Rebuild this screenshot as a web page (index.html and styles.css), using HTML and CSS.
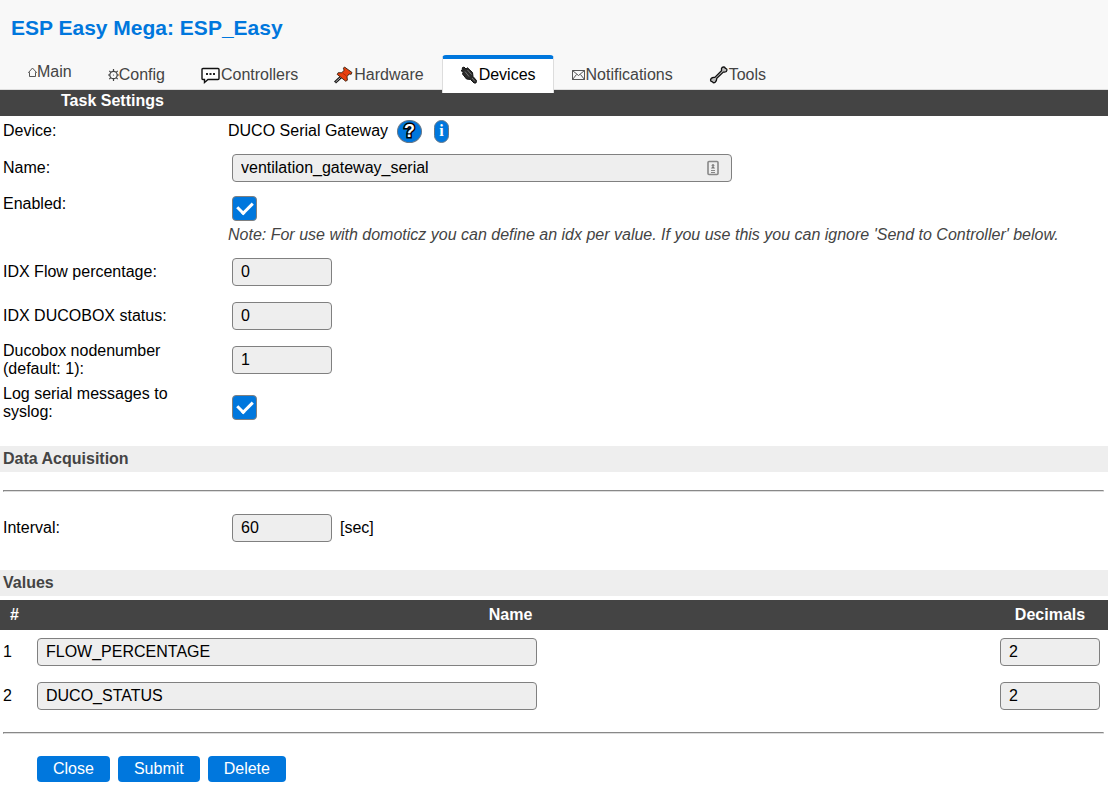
FILE: index.html
```html
<!DOCTYPE html>
<html lang="en">
<head>
<meta charset="utf-8">
<meta name="viewport" content="width=device-width, initial-scale=1">
<title>ESP_Easy</title>
<link rel="stylesheet" href="styles.css">
</head>
<body>
<header class="header">
  <h1 class="title">ESP Easy Mega: ESP_Easy</h1>
  <nav class="menu">
    <a class="tab tab-raised" href="#main"><svg width="9" height="12" viewBox="0 0 9 12" fill="none" stroke="#444"><path d="M.5 6.500 4.500 2l4 4.500h-1v4h-6v-4z" stroke-width=".9"/></svg>Main</a>
    <a class="tab" href="#config"><svg width="11" height="14" viewBox="0 0 11 14" fill="none" stroke="#444"><circle cx="5.500" cy="7" r="3.700" stroke-width="1.200"/><circle cx="5.500" cy="7" r=".6" fill="#444" stroke="none"/><path d="M5.500 1v2M5.500 11v2M0 7h2M9 7h2M1.300 2.800l1.500 1.500M8.200 9.700l1.500 1.500M9.700 2.800 8.200 4.300M2.800 9.700l-1.500 1.500" stroke-width="1.200"/></svg>Config</a>
    <a class="tab" href="#controllers"><svg width="20" height="18" viewBox="0 0 20 18"><path d="M2 2.500h15q1 0 1 1v9q0 1-1 1H7L3.500 16.500v-3H2q-1 0-1-1v-9q0-1 1-1z" fill="#fff" stroke="#111" stroke-width="1.400"/><path d="M5 7h2v2H5zM8.500 7h2v2h-2zM12 7h2v2h-2z" fill="#222"/></svg>Controllers</a>
    <a class="tab" href="#hardware"><svg width="20" height="18" viewBox="0 0 20 18"><path d="M1 16.500 7.500 10.500" stroke="#111" stroke-width="3"/><path d="M1.500 16 7 11" stroke="#bbb" stroke-width="1"/><path d="m10.500 1 7.500 5.500-.8 1.800-2.200-.3-2 2.700.4 3.500-1.700 1L3.200 8.400l1-1.700 3.600.1 2.300-2.600-.7-2z" fill="#e8400f" stroke="#321" stroke-width=".9"/><path d="m8.500 7 4 3" stroke="#b52a08"/></svg>Hardware</a>
    <a class="tab tab-active" href="#devices" aria-current="page"><svg width="19" height="18" viewBox="0 0 19 18"><path d="m1 4.500 2-1-1-1.500 2-1 2 2 1.500-1.200L12.500 6.500l.5 4 3.500 4-.5 2.500h-2l-3.500-3.500-4-.5-4-5 .7-1.500z" fill="#2a2a2a" stroke="#111"/><path d="m5 5.500 4 5M7.500 4l4 4.500M12 12l3 3.500" stroke="#888" stroke-width=".8"/></svg>Devices</a>
    <a class="tab" href="#notifications"><svg width="14" height="12" viewBox="0 0 14 12" fill="none" stroke="#444"><path d="M.5 1.500h12v9H.5zM.5 1.500l6 5 6-5M.5 10.500l4-5M12.500 10.500l-4-5" stroke-width=".9"/></svg>Notifications</a>
    <a class="tab" href="#tools"><svg width="20" height="18" viewBox="0 0 20 18"><path d="M12.500 2.500Q13 .8 15 1q1.300.2 1.300 1.300 1.700.2 1.700 1.700-.2 2-2.500 2.200l-1.200-.1-6.500 6.200q0 3-1.800 4.200-1.500.8-2.500-.6-2-.2-2-1.900.3-2.300 3.200-2.600h1.100l6.700-6.600z" fill="#bbb" stroke="#111" stroke-width="1.300"/></svg>Tools</a>
  </nav>
</header>

<main>
  <h2 class="bar">Task Settings</h2>
  <form class="form">
    <div class="row row-short">
      <span class="label">Device:</span>
      <span class="field">DUCO Serial Gateway
        <a class="badge badge-help" href="#help" aria-label="Help">?</a>
        <a class="badge badge-info" href="#info" aria-label="Info">i</a>
      </span>
    </div>
    <div class="row row-input">
      <label class="label" for="name">Name:</label>
      <span class="field field-name"><input class="input input-wide" id="name" type="text" value="ventilation_gateway_serial"><svg class="contact" width="12" height="16" viewBox="0 0 12 16" fill="none" stroke="#888"><rect x="1" y="1.500" width="10" height="13" rx="1" stroke-width="1.600"/><path d="M4 10.500h4M4 12.500h4"/><circle cx="6" cy="5.500" r="1" fill="#777"/><path d="M4 8.500h4L7 7H5z" fill="#777" stroke="none"/></svg></span>
    </div>
    <div class="row">
      <label class="label" for="enabled">Enabled:</label>
      <input class="check" id="enabled" type="checkbox" checked>
    </div>
    <p class="note">Note: For use with domoticz you can define an idx per value. If you use this you can ignore 'Send to Controller' below.</p>
    <div class="row row-input">
      <label class="label" for="idx1">IDX Flow percentage:</label>
      <input class="input input-num" id="idx1" type="text" value="0">
    </div>
    <div class="row row-input">
      <label class="label" for="idx2">IDX DUCOBOX status:</label>
      <input class="input input-num" id="idx2" type="text" value="0">
    </div>
    <div class="row row-input">
      <label class="label" for="node">Ducobox nodenumber (default: 1):</label>
      <input class="input input-num" id="node" type="text" value="1">
    </div>
    <div class="row row-tall">
      <label class="label" for="log">Log serial messages to syslog:</label>
      <input class="check" id="log" type="checkbox" checked>
    </div>

    <h3 class="section section-data">Data Acquisition</h3>
    <hr class="rule">
    <div class="row row-input row-interval">
      <label class="label" for="interval">Interval:</label>
      <input class="input input-num" id="interval" type="text" value="60">
      <span>[sec]</span>
    </div>

    <h3 class="section section-values">Values</h3>
    <table class="values">
      <thead>
        <tr><th class="col-num">#</th><th>Name</th><th class="col-dec">Decimals</th></tr>
      </thead>
      <tbody>
        <tr>
          <td class="num">1</td>
          <td><input class="input input-wide" type="text" value="FLOW_PERCENTAGE" aria-label="Name 1"></td>
          <td><input class="input input-num" type="text" value="2" aria-label="Decimals 1"></td>
        </tr>
        <tr>
          <td class="num">2</td>
          <td><input class="input input-wide" type="text" value="DUCO_STATUS" aria-label="Name 2"></td>
          <td><input class="input input-num" type="text" value="2" aria-label="Decimals 2"></td>
        </tr>
      </tbody>
    </table>
    <hr class="rule rule-end">
    <div class="actions">
      <button class="button" type="button">Close</button>
      <button class="button" type="button">Submit</button>
      <button class="button" type="button">Delete</button>
    </div>
  </form>
</main>
</body>
</html>
```
FILE: styles.css
```css
* {
  box-sizing: border-box;
}

body {
  margin: 0;
  background: #fff;
  color: #000;
  font: 16px/18px "Liberation Sans", Arial, sans-serif;
}

.header {
  position: relative;
  z-index: 1;
  padding: 16px 10px 0;
  background: #f8f8f8;
  border-bottom: 1px solid #ddd;
}

.title {
  margin: 0 0 15px 1px;
  color: #07d;
  font-size: 21px;
  line-height: 24px;
}

.menu {
  display: flex;
  margin-bottom: -4px;
}

.tab {
  display: flex;
  align-items: center;
  height: 38px;
  padding: 0 17px 2px;
  border: 1px solid transparent;
  border-top-width: 4px;
  border-bottom: 0;
  color: #444;
  text-decoration: none;
}

.tab svg {
  flex: none;
}

.tab-raised {
  padding-bottom: 8px;
}

.tab-active {
  background: #fff;
  border-color: #07d #ddd;
  border-radius: 4px 4px 0 0;
  color: #000;
}

.bar {
  margin: 0;
  padding: 1px 61px 5px;
  background: #444;
  color: #fff;
  font-size: 16px;
  line-height: 20px;
}

.row {
  display: flex;
  align-items: center;
  min-height: 28px;
}

.row-short {
  min-height: 30px;
}

.row-tall {
  min-height: 42px;
}

.row-input {
  min-height: 44px;
}

.label {
  flex: none;
  width: 228px;
  padding: 0 50px 0 3px;
}

.field {
  display: flex;
  align-items: center;
}

.field-name {
  position: relative;
}

.input {
  height: 28px;
  margin: 0 8px 0 4px;
  padding: 0 8px;
  background: #eee;
  border: 1px solid #808080;
  border-radius: 4px;
  color: #000;
  font: inherit;
}

.input-wide {
  width: 500px;
}

.input-num {
  width: 100px;
}

.contact {
  position: absolute;
  right: 21px;
}

.badge {
  display: flex;
  align-items: center;
  justify-content: center;
  height: 23px;
  margin-left: 9px;
  background: #07d;
  border: 1px solid #678;
  border-radius: 50%;
  color: #fff;
  font-weight: bold;
  text-decoration: none;
}

.badge-help {
  width: 25px;
  font-size: 18px;
  -webkit-text-stroke: 3px #000;
  paint-order: stroke fill;
}

.badge-info {
  width: 15px;
  margin-left: 12px;
  border-radius: 8px;
  font-family: "Liberation Serif", serif;
}

/* The box hangs slightly below the label's centre line. */
.check {
  appearance: none;
  display: flex;
  align-items: center;
  justify-content: center;
  width: 25px;
  height: 25px;
  margin: 6px 0 -3px 4px;
  background: #07d;
  border: 1px solid #808080;
  border-radius: 4px;
}

.check::before {
  content: "";
  width: 7px;
  height: 12px;
  margin-bottom: 4px;
  border: solid #fff;
  border-width: 0 3px 3px 0;
  rotate: 45deg;
}

.note {
  margin: 0;
  padding: 8px 0 6px 228px;
  color: #444;
  font-style: italic;
}

.section {
  margin: 0;
  padding: 4px 3px;
  background: #eee;
  color: #444;
  font-size: 16px;
}

.section-data {
  margin-top: 22px;
}

.section-values {
  margin: 20px 0 4px;
}

.rule {
  margin: 18px 4px 14px 3px;
  border: 1px solid;
  border-color: #888 #ddd #ddd #888;
}

.rule-end {
  margin-top: 14px;
  margin-bottom: 22px;
}

.values {
  width: 100%;
  border-collapse: collapse;
  table-layout: fixed;
}

.values th {
  height: 30px;
  padding: 0;
  background: #444;
  color: #fff;
}

.values td {
  height: 44px;
  padding: 0 0 0 4px;
}

.values .num {
  padding: 0 0 0 3px;
}

.values .col-num {
  width: 29px;
}

.values .col-dec {
  width: 116px;
}

.actions {
  display: flex;
  gap: 8px;
  padding: 0 37px 11px;
}

.button {
  height: 26px;
  padding: 0 16px 1px;
  background: #07d;
  border: 0;
  border-radius: 4px;
  color: #fff;
  font: inherit;
}
```
